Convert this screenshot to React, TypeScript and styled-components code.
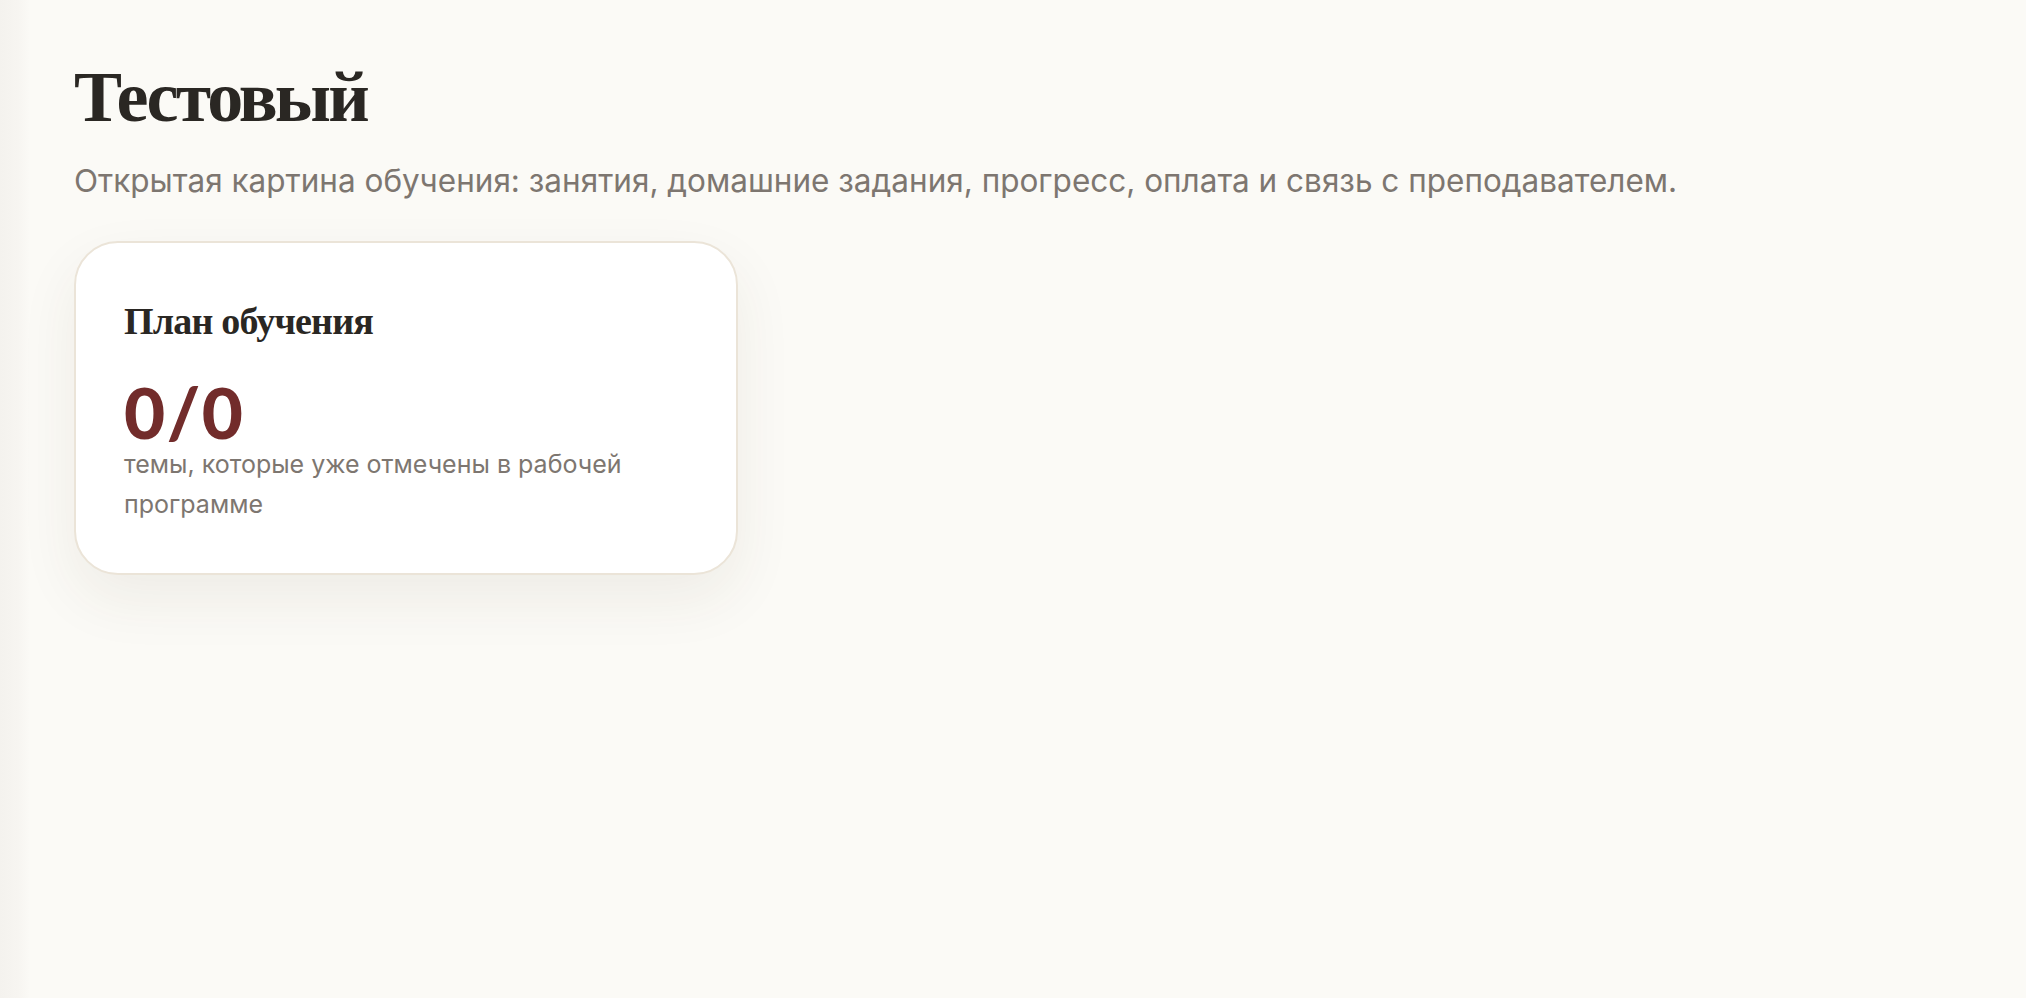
import styled, { createGlobalStyle } from 'styled-components';

const GlobalStyle = createGlobalStyle`
  html, body {
    margin: 0;
    padding: 0;
    background: #fbfaf6;
  }
  #root {
    min-height: 100vh;
  }
`;

const Layout = styled.div`
  display: flex;
  min-height: 100vh;
  background: #fbfaf6;
`;

const EdgeShade = styled.div`
  flex: 0 0 30px;
  background: linear-gradient(90deg, #f4f2ee 0%, #f7f5f1 60%, #fbfaf6 100%);
`;

const Main = styled.main`
  flex: 1;
  display: flex;
  flex-direction: column;
  align-items: flex-start;
  padding: 58px 44px;
`;

const Title = styled.h1`
  margin: 0;
  font-family: 'Liberation Serif', 'DejaVu Serif', serif;
  font-weight: 700;
  font-size: 72px;
  line-height: 1.1;
  letter-spacing: -2.8px;
  color: #2a2723;
`;

const Lead = styled.p`
  margin: 22px 0 0;
  font-family: 'Inter', 'Noto Sans', sans-serif;
  font-size: 31.5px;
  line-height: 1.4;
  color: #7d7670;
`;

const Grid = styled.section`
  margin-top: 38px;
  display: grid;
  grid-template-columns: 664px;
  gap: 24px;
`;

const Card = styled.article`
  box-sizing: border-box;
  padding: 56px 48px 49px;
  background: #ffffff;
  border: 2px solid #ebe4d8;
  border-radius: 44px;
  box-shadow: 0 24px 60px rgba(70, 50, 30, 0.07);
`;

const CardTitle = styled.h2`
  margin: 0;
  font-family: 'Liberation Serif', 'DejaVu Serif', serif;
  font-weight: 700;
  font-size: 38px;
  line-height: 1.2;
  letter-spacing: -0.8px;
  color: #2a2723;
`;

const Stat = styled.div`
  margin-top: 34px;
  font-family: 'Lato', 'Inter', sans-serif;
  font-weight: 900;
  font-size: 71px;
  line-height: 0.92;
  letter-spacing: 1.5px;
  color: #722c2b;
`;

const Note = styled.p`
  margin: 0;
  font-family: 'Inter', 'Noto Sans', sans-serif;
  font-size: 25px;
  line-height: 40px;
  color: #7d7670;
`;

export default function App() {
  return (
    <>
      <GlobalStyle />
      <Layout>
        <EdgeShade />
        <Main>
          <Title>Тестовый</Title>
          <Lead>
            Открытая картина обучения: занятия, домашние задания, прогресс, оплата и связь с преподавателем.
          </Lead>
          <Grid>
            <Card>
              <CardTitle>План обучения</CardTitle>
              <Stat>0/0</Stat>
              <Note>темы, которые уже отмечены в рабочей программе</Note>
            </Card>
          </Grid>
        </Main>
      </Layout>
    </>
  );
}
